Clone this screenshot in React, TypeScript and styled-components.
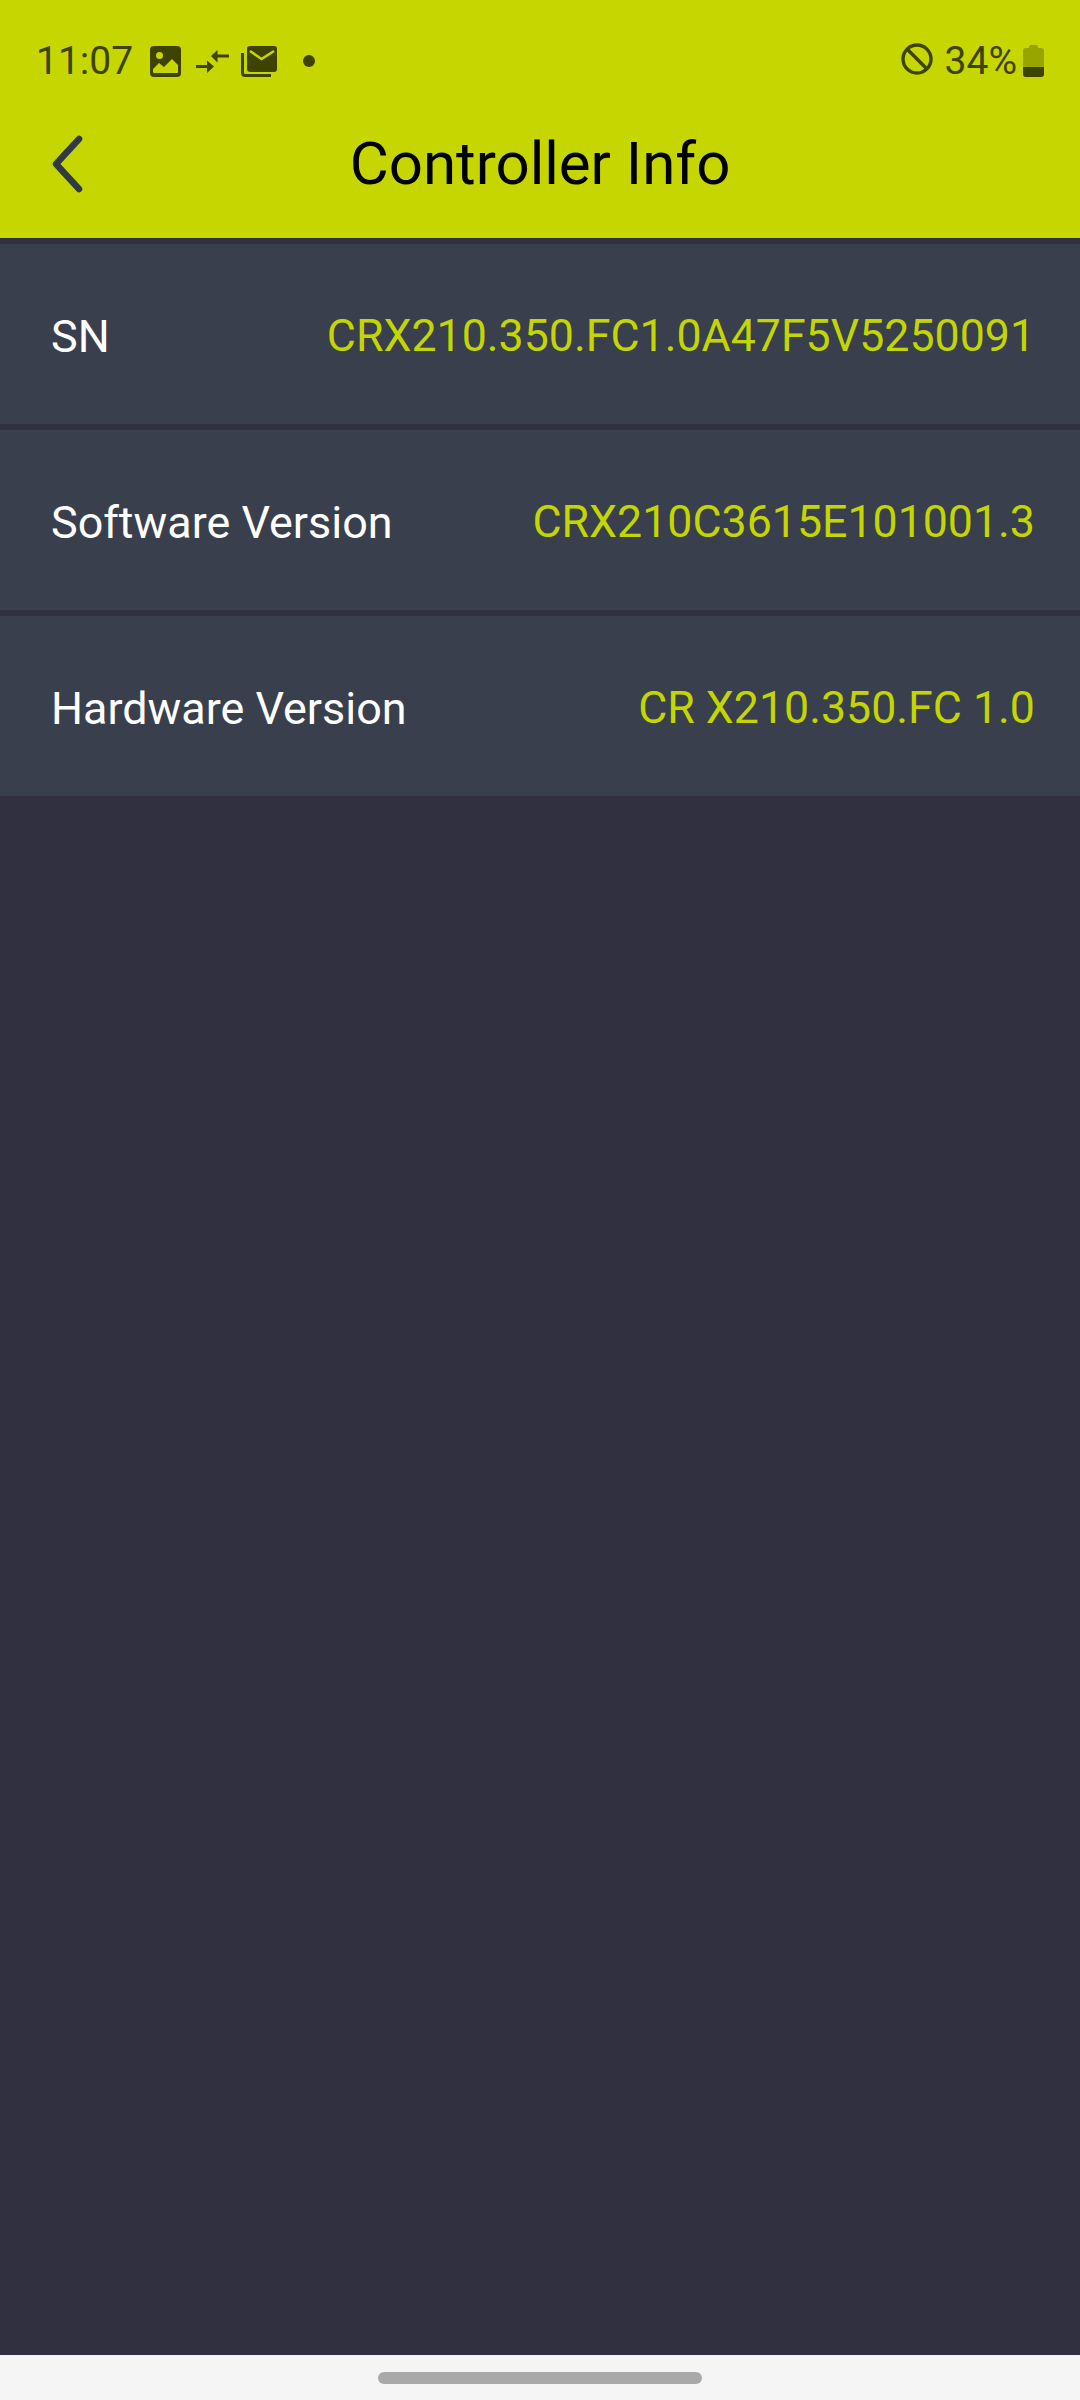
import React from 'react'
import styled, { createGlobalStyle } from 'styled-components'

const GlobalStyle = createGlobalStyle`
  html, body {
    margin: 0;
    padding: 0;
    background: #313040;
  }
  * {
    box-sizing: border-box;
  }
`

const Screen = styled.div`
  width: 1080px;
  height: 2400px;
  display: flex;
  flex-direction: column;
  background: #313040;
  font-family: Roboto, 'Liberation Sans', sans-serif;
`

const Header = styled.header`
  height: 238px;
  background: #c5d600;
  display: flex;
  flex-direction: column;
`

const StatusBar = styled.div`
  height: 84px;
  padding: 37px 36px 0 36px;
  display: flex;
  align-items: flex-start;
  justify-content: space-between;
  color: #3f4300;
`

const StatusGroup = styled.div`
  display: flex;
  align-items: center;
  height: 48px;
`

const StatusText = styled.span<{ $left?: number }>`
  font-size: 39px;
  line-height: 48px;
  margin-left: ${({ $left }) => $left ?? 0}px;
`

const StatusIcon = styled.svg<{ $left: number; $lift?: number }>`
  display: block;
  flex: none;
  margin-left: ${({ $left }) => $left}px;
  margin-bottom: ${({ $lift }) => $lift ?? 0}px;
`

const TitleBar = styled.div`
  position: relative;
  flex: 1;
  display: flex;
  align-items: center;
  justify-content: center;
  padding-top: 6px;
`

const BackButton = styled.svg`
  position: absolute;
  left: 50px;
  top: 50px;
`

const Title = styled.h1`
  margin: 0;
  font-size: 60px;
  line-height: 70px;
  font-weight: 400;
  color: #000;
`

const InfoList = styled.div`
  flex: 1;
  padding-top: 6px;
  display: flex;
  flex-direction: column;
  gap: 6px;
`

const InfoRow = styled.div`
  height: 180px;
  padding: 4px 45px 0 51px;
  background: #3a3f4e;
  display: flex;
  align-items: center;
  justify-content: space-between;
`

const Label = styled.span`
  color: #fff;
  font-size: 44.9px;
`

const Value = styled.span`
  color: #c4d600;
  font-size: 44.7px;
`

const NavBar = styled.div`
  height: 45px;
  background: #f5f5f5;
  display: flex;
  justify-content: center;
  padding-top: 17px;
`

const NavPill = styled.div`
  width: 324px;
  height: 12px;
  border-radius: 6px;
  background: #a9a9a9;
`

const rows = [
  { label: 'SN', value: 'CRX210.350.FC1.0A47F5V5250091' },
  { label: 'Software Version', value: 'CRX210C3615E101001.3' },
  { label: 'Hardware Version', value: 'CR X210.350.FC 1.0' },
]

const App: React.FC = () => {
  return (
    <Screen>
      <GlobalStyle />
      <Header>
        <StatusBar>
          <StatusGroup>
            <StatusText>11:07</StatusText>
            <StatusIcon $left={17} width="31" height="31" viewBox="0 0 31 31">
              <rect width="31" height="31" rx="4" fill="#3f4300" />
              <circle cx="9.500" cy="9.500" r="3.500" fill="#c5d600" />
              <path d="M3 23l6-6 5 4 8-8 6 6v7a1 1 0 0 1-1 1H4a1 1 0 0 1-1-1z" fill="#c5d600" />
            </StatusIcon>
            <StatusIcon $left={15} width="33" height="23" viewBox="0 0 33 23">
              <path d="M0 16.500h13M33 6H20" stroke="#3f4300" strokeWidth="3" fill="none" />
              <path d="M11 10.500l7 6-7 6.500zM21.500 0L15 6l6.500 6.500z" fill="#3f4300" />
            </StatusIcon>
            <StatusIcon $left={12} width="36" height="31" viewBox="0 0 36 31">
              <path d="M1.500 7v20a2.500 2.500 0 0 0 2.500 2.500H30" stroke="#3f4300" strokeWidth="3" fill="none" />
              <rect x="6" y="0" width="30" height="26" rx="3" fill="#3f4300" />
              <path d="M9 5l11.500 8L33 5" stroke="#c5d600" strokeWidth="2.600" fill="none" />
            </StatusIcon>
            <StatusIcon $left={26} width="12" height="12" viewBox="0 0 12 12">
              <circle cx="6" cy="6" r="6" fill="#3f4300" />
            </StatusIcon>
          </StatusGroup>
          <StatusGroup>
            <StatusIcon $left={0} $lift={4} width="32" height="32" viewBox="0 0 32 32">
              <circle cx="16" cy="16" r="14" stroke="#3f4300" strokeWidth="3.400" fill="none" />
              <path d="M6 6l20 20" stroke="#3f4300" strokeWidth="3.400" />
            </StatusIcon>
            <StatusText $left={12}>34%</StatusText>
            <StatusIcon $left={6} width="21" height="32" viewBox="0 0 21 32">
              <path d="M6 3V2a2 2 0 0 1 2-2h5a2 2 0 0 1 2 2v1h3a3 3 0 0 1 3 3v23a3 3 0 0 1-3 3H3a3 3 0 0 1-3-3V6a3 3 0 0 1 3-3z" fill="#98a500" />
              <path d="M0 22h21v7a3 3 0 0 1-3 3H3a3 3 0 0 1-3-3z" fill="#3f4300" />
            </StatusIcon>
          </StatusGroup>
        </StatusBar>
        <TitleBar>
          <BackButton width="34" height="60" viewBox="0 0 34 60">
            <path d="M29 5L6 30l23 25" stroke="#2f3a44" strokeWidth="6.500" strokeLinecap="round" strokeLinejoin="round" fill="none" />
          </BackButton>
          <Title>Controller Info</Title>
        </TitleBar>
      </Header>
      <InfoList>
        {rows.map((row) => (
          <InfoRow key={row.label}>
            <Label>{row.label}</Label>
            <Value>{row.value}</Value>
          </InfoRow>
        ))}
      </InfoList>
      <NavBar>
        <NavPill />
      </NavBar>
    </Screen>
  )
}

export default App
